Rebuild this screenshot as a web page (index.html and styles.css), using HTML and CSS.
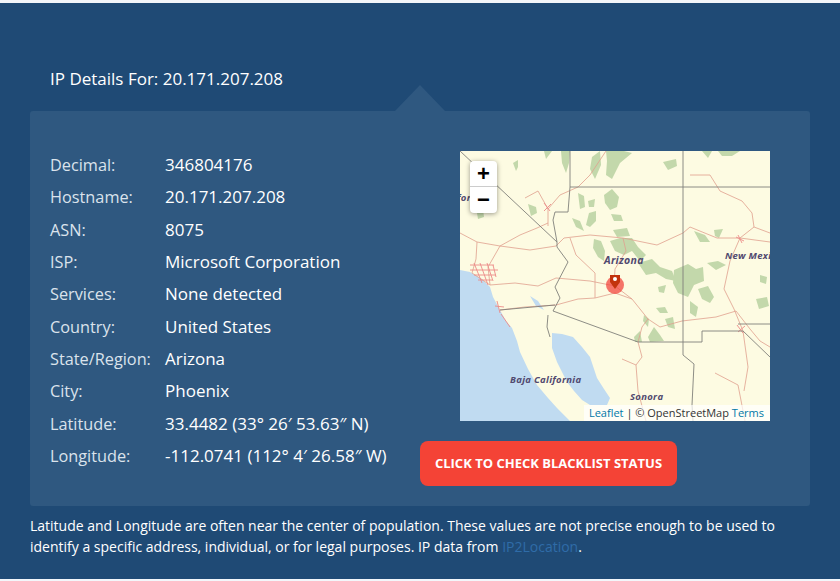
FILE: index.html
```html
<!DOCTYPE html>
<html lang="en">
  <head>
    <meta charset="UTF-8" />
    <meta name="viewport" content="width=device-width, initial-scale=1.0" />
    <title>IP Details</title>
    <link rel="stylesheet" href="styles.css">
  </head>
  <body>
    <main class="ip-section">
      <h2 class="ip-title">IP Details For: 20.171.207.208</h2>

      <div class="ip-panel">
        <div class="ip-details">
          <div class="ip-row"><span class="ip-label">Decimal:</span><span class="ip-value">346804176</span></div>
          <div class="ip-row"><span class="ip-label">Hostname:</span><span class="ip-value">20.171.207.208</span></div>
          <div class="ip-row"><span class="ip-label">ASN:</span><span class="ip-value">8075</span></div>
          <div class="ip-row"><span class="ip-label">ISP:</span><span class="ip-value">Microsoft Corporation</span></div>
          <div class="ip-row"><span class="ip-label">Services:</span><span class="ip-value">None detected</span></div>
          <div class="ip-row"><span class="ip-label">Country:</span><span class="ip-value">United States</span></div>
          <div class="ip-row"><span class="ip-label">State/Region:</span><span class="ip-value">Arizona</span></div>
          <div class="ip-row"><span class="ip-label">City:</span><span class="ip-value">Phoenix</span></div>
          <div class="ip-row"><span class="ip-label">Latitude:</span><span class="ip-value">33.4482 (33° 26′ 53.63″ N)</span></div>
          <div class="ip-row"><span class="ip-label">Longitude:</span><span class="ip-value">-112.0741 (112° 4′ 26.58″ W)</span></div>
        </div>

        <div class="ip-side">
          <div class="map">
            <svg class="map-tiles" width="310" height="270" viewBox="0 0 310 270">
              <rect width="310" height="270" fill="#fdfbe2" />

              <g class="soft">
                <!-- water -->
                <path class="water" d="M0 119 L10 121 L22 128 L30 136 L33 146 L40 159 L46 170 L52 177 L57 190 L60 201 L68 218 L77 234 L88 247 L97 257 L110 270 L0 270 Z" />
                <path class="water" d="M92 182 L102 183 L113 186 L122 196 L130 206 L134 218 L137 227 L144 238 L150 247 L147 254 L130 254 L122 249 L114 240 L107 231 L97 211 L92 197 Z" />
                <path class="water" d="M70 145 L78 150 L84 159 L76 155 Z" />

                <!-- forest -->
                <g class="forest">
                  <path d="M101 0 L110 0 L109 12 L106 22 L102 12 Z" />
                  <path d="M84 0 L92 0 L86 8 Z" />
                  <path d="M53 12 L58 9 L58 16 L56 20 Z" />
                  <path d="M132 6 L140 0 L141 14 L135 28 L130 18 Z" />
                  <path d="M146 0 L164 0 L172 2 L160 12 L152 28 L146 24 L147 10 Z" />
                  <path d="M203 11 L216 8 L217 15 L208 19 Z" />
                  <path d="M242 0 L252 0 L248 7 Z" />
                  <path d="M258 0 L280 0 L272 5 L262 5 Z" />
                  <path d="M144 44 L152 38 L159 46 L157 56 L150 59 L145 52 Z" />
                  <path d="M151 63 L161 64 L163 70 L154 70 Z" />
                  <path d="M118 42 L124 45 L125 56 L120 58 Z" />
                  <path d="M128 50 L135 48 L134 56 L129 56 Z" />
                  <path d="M129 62 L136 60 L136 70 L130 76 L126 74 Z" />
                  <path d="M112 67 L120 70 L124 80 L116 76 Z" />
                  <path d="M68 53 L76 56 L77 62 L71 65 Z" />
                  <path d="M153 79 L167 77 L170 85 L157 86 Z" />
                  <path d="M134 88 L141 90 L145 100 L144 110 L138 106 L133 97 Z" />
                  <path d="M150 90 L160 87 L172 87 L178 96 L186 104 L180 110 L172 100 L164 104 L155 100 Z" />
                  <path d="M178 112 L192 108 L200 116 L212 120 L216 130 L206 128 L196 122 L186 124 Z" />
                  <path d="M234 80 L245 84 L250 91 L240 91 Z" />
                  <path d="M254 79 L263 78 L259 87 L255 85 Z" />
                  <path d="M247 112 L258 110 L266 114 L256 119 Z" />
                  <path d="M214 119 L228 113 L236 118 L243 116 L244 130 L234 134 L228 146 L218 142 L213 132 Z" />
                  <path d="M238 138 L248 135 L254 146 L250 152 L242 148 Z" />
                  <path d="M230 150 L238 156 L236 166 L230 162 Z" />
                  <path d="M296 148 L307 146 L309 155 L299 158 Z" />
                  <path d="M300 124 L307 126 L306 133 L300 131 Z" />
                  <path d="M184 164 L189 168 L188 176 L183 170 Z" />
                  <path d="M188 186 L194 176 L200 184 L204 190 L190 191 Z" />
                  <path d="M205 168 L213 166 L215 178 L208 176 Z" />
                  <path d="M196 157 L205 156 L208 162 L200 162 Z" />
                  <path d="M174 186 L180 180 L182 191 L175 191 Z" />
                  <path d="M198 136 L206 134 L204 142 L199 141 Z" />
                  <path d="M17 62 L23 58 L24 66 L18 68 Z" />
                </g>

                <!-- roads -->
                <g class="roads">
                  <path d="M0 82 L17 91 L40 95 L60 84 L77 77 L88 72" />
                  <path d="M40 95 L70 99 L96 95 L104 87 L130 84 L163 87 L197 94 L223 82 L230 76 L257 87 L280 87 L310 91" />
                  <path d="M17 91 L16 108 L12 122 L30 134 L55 132 L78 135 L96 127 L130 130 L155 135 L172 148 L188 168 L200 176 L222 170 L256 166 L276 160 L290 178 L300 190 L310 196" />
                  <path d="M40 95 L28 116 L30 134" />
                  <path d="M163 87 L166 100 L155 118 L154 135" />
                  <path d="M88 58 L78 40 L65 47" />
                  <path d="M88 58 L100 44 L118 36 L130 24 L146 0" />
                  <path d="M88 58 L88 75" />
                  <path d="M40 159 L65 156 L96 154 L118 148 L135 147 L155 142 L172 148" />
                  <path d="M135 147 L135 122 L116 104 L110 87" />
                  <path d="M178 191 L182 176 L188 168" />
                  <path d="M178 191 L182 206 L176 214 L162 208" />
                  <path d="M176 214 L178 240 L186 270" />
                  <path d="M280 87 L270 110 L264 138 L274 158 L283 180" />
                  <path d="M280 87 L294 76 L292 62 L282 50 L260 40 L250 24 L230 24" />
                  <path d="M294 76 L310 82" />
                  <path d="M255 222 L278 234 L285 270" />
                  <path d="M283 180 L288 216 L284 240" />
                </g>
                <g class="cities">
                  <path d="M10 114 H34 M10 119 H38 M14 124 H36 M18 129 H32 M14 112 L22 132 M20 112 L28 134 M27 112 L33 130 M33 114 L36 126" />
                  <path d="M37 150 L40 162 M35 155 L44 156 M41 163 L50 176" />
                  <path d="M84 52 L90 60 M84 60 L91 53" />
                  <path d="M277 174 L283 182 M278 181 L285 175" />
                  <path d="M276 86 L284 90 M278 84 L282 92" />
                </g>

                <!-- borders -->
                <g class="borders">
                  <path d="M0 0 L97 91 L97 96 L108 111 L95 136 L100 147 L93 160 L178 191 L242 191 L242 180 L283 180 L310 206" />
                  <path d="M110 0 L110 36 L310 36 M223 0 L223 204 L234 213 L232 254 L233 270" />
                  <path d="M110 36 L108 61 L95 61 L93 69 L97 91" />
                  <path d="M40 159 L95 154 M278 173 L310 173 M88 164 L87 176 L90 186" />
                </g>
              </g>

              <!-- place names -->
              <g class="place">
                <text class="place-state" x="144" y="113">Arizona</text>
                <text x="265" y="108">New Mexico</text>
                <text x="50" y="232">Baja California</text>
                <text x="170" y="249">Sonora</text>
                <text x="-3" y="50">for</text>
              </g>

              <!-- marker -->
              <circle cx="155" cy="134" r="9" fill="#f2473f" fill-opacity="0.75" />
              <path d="M150 124 H160 V131 L155 138 L150 131 Z" fill="#c2330c" />
              <circle cx="155" cy="128" r="2" fill="#fff" />
            </svg>

            <div class="zoom">
              <a class="zoom-btn" href="#">+</a>
              <a class="zoom-btn" href="#">−</a>
            </div>
            <div class="attribution"><a href="#">Leaflet</a> | © OpenStreetMap <a href="#">Terms</a></div>
          </div>

          <a class="blacklist-btn" href="#">Click to check blacklist status</a>
        </div>
      </div>

      <p class="ip-note">Latitude and Longitude are often near the center of population. These values are not precise enough to be used to identify a specific address, individual, or for legal purposes. IP data from <a href="#">IP2Location</a>.</p>
    </main>
  </body>
</html>
```

FILE: styles.css
```css
* {
  margin: 0;
  padding: 0;
  box-sizing: border-box;
}

html,
body {
  height: 581px;
  overflow: hidden;
}

body {
  background: #f3f6fa;
  padding-top: 3px;
  font-family: "Open Sans", Arial, sans-serif;
  color: #fff;
}

a {
  text-decoration: none;
}

.ip-section {
  height: 576px;
  padding: 0 30px;
  background: #1f4a75;
}

.ip-title {
  padding: 63px 20px 19px;
  font-size: 17px;
  font-weight: 400;
  line-height: 26px;
}

.ip-panel {
  position: relative;
  display: flex;
  height: 395px;
  padding: 38px 0 20px 20px;
  background: #2f5880;
  border-radius: 3px;
}

/* arrow over the panel top */
.ip-panel::before {
  content: "";
  position: absolute;
  top: -26px;
  left: 365px;
  width: 50px;
  height: 26px;
  background: #2f5880;
  clip-path: polygon(50% 0, 100% 100%, 0 100%);
}

.ip-details {
  width: 370px;
}

.ip-row {
  display: flex;
  font-size: 17px;
  line-height: 32.33px;
}

.ip-label {
  width: 115px;
  flex-shrink: 0;
  font-size: 16.3px;
  color: #dbe3ec;
}

.ip-value {
  white-space: nowrap;
}

.ip-side {
  padding-top: 2px;
}

.map {
  position: relative;
  width: 310px;
  height: 270px;
  margin-left: 40px;
  overflow: hidden;
}

.map-tiles {
  display: block;
}

.soft {
  filter: blur(0.35px);
}

.water {
  fill: #c0dbf1;
}

.forest path {
  fill: #c3d8ab;
}

.roads path {
  fill: none;
  stroke: #df9f8e;
  stroke-width: 0.8;
}

.cities path {
  fill: none;
  stroke: #ec8a88;
  stroke-width: 0.9;
}

.borders path {
  fill: none;
  stroke: #80807a;
  stroke-width: 0.9;
}

.place text {
  font-family: "Open Sans", Arial, sans-serif;
  font-size: 9.5px;
  font-style: italic;
  font-weight: 700;
  letter-spacing: 0.3px;
  fill: #51496f;
}

.place .place-state {
  font-size: 10.5px;
}

.zoom {
  position: absolute;
  top: 10px;
  left: 10px;
  width: 27px;
  background: #fff;
  border-radius: 4px;
  box-shadow: 0 1px 5px rgba(0, 0, 0, 0.4);
}

.zoom-btn {
  display: block;
  height: 26px;
  font-family: "Liberation Sans", Arial, sans-serif;
  font-size: 22px;
  font-weight: 700;
  line-height: 26px;
  text-align: center;
  color: #000;
}

.zoom-btn:first-child {
  border-bottom: 1px solid #ccc;
}

.attribution {
  position: absolute;
  right: 0;
  bottom: 0;
  padding: 0 6px 0 5px;
  background: rgba(255, 255, 255, 0.7);
  font-size: 11px;
  line-height: 16px;
  color: #333;
}

.attribution a {
  color: #0078a8;
}

.blacklist-btn {
  display: block;
  width: 257px;
  height: 45px;
  margin-top: 20px;
  background: #f44336;
  border-radius: 8px;
  font-size: 13px;
  font-weight: 700;
  line-height: 45px;
  text-align: center;
  text-transform: uppercase;
  color: #fff;
}

.ip-note {
  padding-top: 9px;
  font-size: 14px;
  line-height: 21px;
}

.ip-note a {
  color: #2f6ca8;
}
```
